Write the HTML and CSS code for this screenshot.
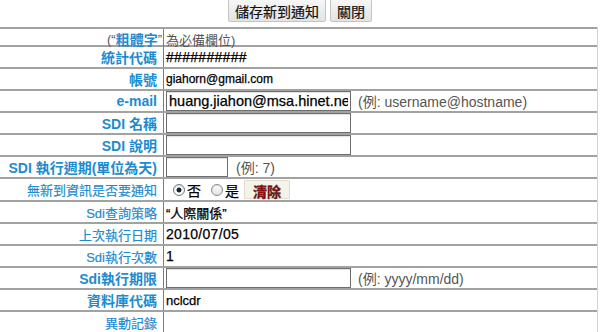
FILE: index.html
```html
<!DOCTYPE html>
<html lang="zh-Hant">
<head>
<meta charset="utf-8">
<title>SDI 設定</title>
<link rel="stylesheet" href="styles.css">
</head>
<body>
<div class="toolbar">
  <button class="btn" type="button">儲存新到通知</button>
  <button class="btn" type="button">關閉</button>
</div>
<div class="form">
  <div class="row row-head">
    <div class="label note">(“<b class="req-inline">粗體字</b>”</div>
    <div class="value note">為必備欄位)</div>
  </div>
  <div class="row">
    <div class="label req">統計代碼</div>
    <div class="value wide">##########</div>
  </div>
  <div class="row">
    <div class="label req">帳號</div>
    <div class="value small">giahorn@gmail.com</div>
  </div>
  <div class="row">
    <div class="label req">e-mail</div>
    <div class="value"><input class="field field-mail" type="text" value="huang.jiahon@msa.hinet.net"><span class="hint">(例: username@hostname)</span></div>
  </div>
  <div class="row">
    <div class="label req">SDI 名稱</div>
    <div class="value"><input class="field" type="text"></div>
  </div>
  <div class="row">
    <div class="label req">SDI 說明</div>
    <div class="value"><input class="field" type="text"></div>
  </div>
  <div class="row">
    <div class="label req">SDI 執行週期(單位為天)</div>
    <div class="value"><input class="field field-short" type="text"><span class="hint hint-short">(例: 7)</span></div>
  </div>
  <div class="row row-tall">
    <div class="label">無新到資訊是否要通知</div>
    <div class="value">
      <input class="radio" type="radio" name="notify" checked><span class="opt">否</span>
      <input class="radio radio-2" type="radio" name="notify"><span class="opt">是</span>
      <button class="clear" type="button">清除</button>
    </div>
  </div>
  <div class="row">
    <div class="label">Sdi查詢策略</div>
    <div class="value">“人際關係”</div>
  </div>
  <div class="row">
    <div class="label">上次執行日期</div>
    <div class="value wide">2010/07/05</div>
  </div>
  <div class="row">
    <div class="label">Sdi執行次數</div>
    <div class="value wide">1</div>
  </div>
  <div class="row">
    <div class="label req">Sdi執行期限</div>
    <div class="value"><input class="field" type="text"><span class="hint">(例: yyyy/mm/dd)</span></div>
  </div>
  <div class="row">
    <div class="label req">資料庫代碼</div>
    <div class="value">nclcdr</div>
  </div>
  <div class="row">
    <div class="label">異動記錄</div>
    <div class="value"></div>
  </div>
</div>
</body>
</html>
```

FILE: styles.css
```css
html, body {
  margin: 0;
  padding: 0;
  background: #fff;
}

body {
  font-family: "Liberation Sans", "Noto Sans CJK TC", sans-serif;
  font-size: 13px;
  color: #000;
}

.toolbar {
  height: 27px;
  display: flex;
  justify-content: center;
  align-items: flex-start;
  gap: 4px;
}

.btn {
  margin: -1px 0 0;
  height: 23px;
  padding: 0 6px;
  font-family: "Liberation Sans", "Noto Sans CJK TC", sans-serif;
  font-size: 14px;
  color: #111;
  background: linear-gradient(#f7f7f7, #e3e3e3);
  border: 1px solid #c4c4c4;
  border-radius: 2px;
  -webkit-text-stroke: 0.2px #111;
}

.form {
  width: 597px;
  border-right: 1px solid #d2d2d2;
}

.row {
  display: grid;
  grid-template-columns: 164px 1fr;
  height: 22px;
  box-sizing: border-box;
  border-top: 2px solid #a2a2a2;
}

.row-head {
  height: 18px;
}

.row-tall {
  height: 23px;
}

.label {
  border-right: 1px solid #7c7c7c;
  text-align: right;
  padding-right: 6px;
  color: #1e8bcf;
  white-space: nowrap;
  display: flex;
  align-items: center;
  justify-content: flex-end;
  -webkit-text-stroke: 0.2px #1e8bcf;
}

.req {
  font-weight: bold;
  font-size: 14px;
  -webkit-text-stroke: 0;
}

.req-inline {
  font-weight: bold;
  font-size: 14px;
  color: #1e8bcf;
}

.note {
  color: #555;
  -webkit-text-stroke: 0;
}

.row-head .label {
  padding-right: 1px;
}

.value {
  display: flex;
  align-items: center;
  padding-left: 2px;
  white-space: nowrap;
  overflow: hidden;
  -webkit-text-stroke: 0.25px #000;
}

.value.note {
  -webkit-text-stroke: 0;
}

.wide {
  font-size: 14px;
  letter-spacing: 0.3px;
}

.small {
  font-size: 12px;
}

.field {
  box-sizing: border-box;
  width: 185px;
  height: 20px;
  margin: 0;
  padding: 0 2px;
  border: 1px solid #6e6e6e;
  box-shadow: inset 0 1px 1px rgba(0, 0, 0, 0.12);
  font-family: "Liberation Sans", sans-serif;
  font-size: 14px;
  color: #000;
  background: #fff;
}

.field-mail {
  font-size: 14.5px;
}

.field-short {
  width: 62px;
}

.hint {
  margin-left: 7px;
  color: #555;
  font-size: 14px;
  -webkit-text-stroke: 0;
}

.hint-short {
  margin-left: 8px;
}

.radio {
  appearance: none;
  -webkit-appearance: none;
  box-sizing: border-box;
  width: 12px;
  height: 12px;
  margin: 0 2px 0 7px;
  border-radius: 50%;
  border: 1px solid #8c8c8c;
  background: linear-gradient(#ffffff, #e2e2e2);
  box-shadow: inset 0 1px 1px rgba(0, 0, 0, 0.15);
}

.radio:checked {
  background: radial-gradient(circle, #1b2535 0, #1b2535 2.2px, #ffffff 2.8px, #e8eef6 100%);
  border-color: #6f7c8c;
}

.radio-2 {
  margin-left: 10px;
}

.opt {
  font-size: 14px;
}

.clear {
  margin: 0 0 0 5px;
  width: 46px;
  height: 19px;
  padding: 0;
  font-family: "Liberation Sans", "Noto Sans CJK TC", sans-serif;
  font-size: 14px;
  font-weight: bold;
  color: #8a1212;
  background: #f4f2e9;
  border: 1px solid #e0ddd0;
  border-radius: 1px;
}
```
